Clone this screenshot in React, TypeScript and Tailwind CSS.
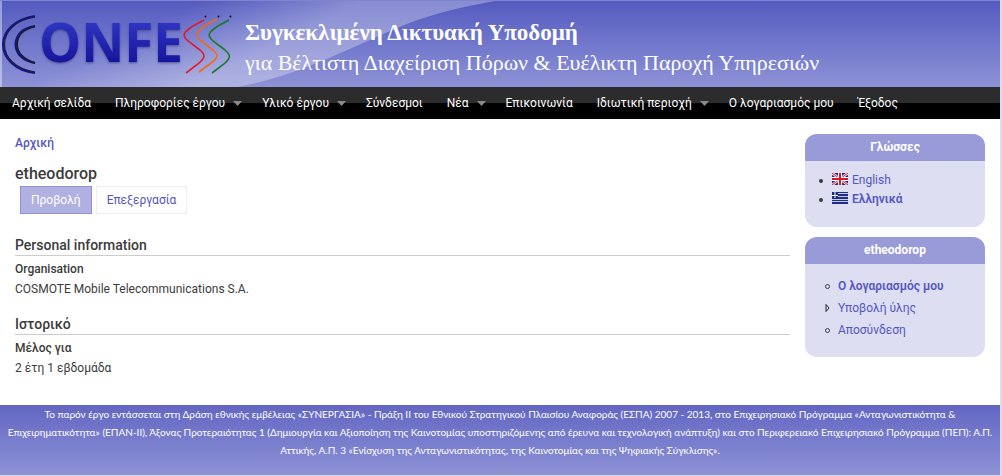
import { clsx } from "clsx";

const NAV_ITEMS = [
  { label: "Αρχική σελίδα", hasMenu: false },
  { label: "Πληροφορίες έργου", hasMenu: true },
  { label: "Υλικό έργου", hasMenu: true },
  { label: "Σύνδεσμοι", hasMenu: false },
  { label: "Νέα", hasMenu: true },
  { label: "Επικοινωνία", hasMenu: false },
  { label: "Ιδιωτική περιοχή", hasMenu: true },
  { label: "Ο λογαριασμός μου", hasMenu: false },
  { label: "Έξοδος", hasMenu: false },
];

function Logo() {
  return (
    <svg width="240" height="86" viewBox="0 0 240 86" role="img" aria-label="CONFESS" className="shrink-0">
      <defs>
        <linearGradient id="letters" x1="0" y1="0" x2="0" y2="1">
          <stop offset="20%" stopColor="#3036c4" />
          <stop offset="80%" stopColor="#15159c" />
        </linearGradient>
        <filter id="letterShadow" x="-10%" y="-10%" width="120%" height="130%">
          <feDropShadow dx="0" dy="1" stdDeviation="1" floodColor="#26265e" floodOpacity="0.6" />
        </filter>
      </defs>
      <g fill="none" strokeLinecap="butt">
        <path d="M35 15C15 18 3 30 3 43.500S15 70 35 72" stroke="#15158a" strokeWidth="2" />
        <path d="M35 16C16 19 4.500 30 4.500 43.500S16 68 35 71" stroke="#1c1c38" strokeWidth="1.200" />
        <path d="M35 25C22 27 15.500 34 15.500 43.500S23 60 35 62" stroke="#15158a" strokeWidth="2" />
        <path d="M35 25.500C23 28 17 35 17 43.500S24 59 35 62" stroke="#1c1c38" strokeWidth="2" />
      </g>
      <text
        x="39"
        y="61"
        fill="url(#letters)"
        filter="url(#letterShadow)"
        className="font-['Open_Sans',sans-serif] text-[53px] font-bold"
      >
        ONFE
      </text>
      <g fill="none" strokeWidth="1.600">
        <path d="M204 19L193 25C184 31 181 34 188 40L200 49C206 54 205 57 198 63L186 72" stroke="#e01b2c" />
        <path d="M217 18L206 24C197 30 194 34 201 40L213 49C219 54 218 57 211 62L199 71" stroke="#f06a1c" />
        <path d="M229 19L218 25C209 31 206 34 213 40L225 49C231 54 231 57 224 63L212 72" stroke="#1a7a2c" />
      </g>
      <g fill="#101020">
        <circle cx="205.500" cy="15.500" r="1" />
        <circle cx="218.500" cy="15.500" r="1" />
        <circle cx="230.500" cy="15.500" r="1" />
      </g>
    </svg>
  );
}

function Swoosh() {
  return (
    <svg width="500" height="86" viewBox="0 0 500 86" aria-hidden="true" className="absolute left-0 top-0">
      <defs>
        <linearGradient id="swoosh" gradientUnits="userSpaceOnUse" x1="200" y1="0" x2="250" y2="100">
          <stop offset="0%" stopColor="#ffffff" stopOpacity="0" />
          <stop offset="65%" stopColor="#ffffff" stopOpacity="0.3" />
          <stop offset="100%" stopColor="#ffffff" stopOpacity="0.3" />
        </linearGradient>
      </defs>
      <path d="M0 0H495C450 8 425 15 390 30C335 54 295 75 238 86H0Z" fill="url(#swoosh)" />
      <rect width="2" height="86" fill="#ffffff" fillOpacity="0.4" />
    </svg>
  );
}

function BritishFlag() {
  return (
    <svg width="16" height="12" viewBox="0 0 16 12" aria-hidden="true" className="mb-1">
      <rect width="16" height="12" fill="#1f2d78" />
      <path d="M0 0L16 12M16 0L0 12" stroke="#f0dce4" strokeWidth="2.600" />
      <path d="M0 0L16 12M16 0L0 12" stroke="#d8283c" strokeWidth="1" />
      <path d="M8 0V12M0 6H16" stroke="#ffffff" strokeWidth="4" />
      <path d="M8 0V12M0 6H16" stroke="#d8142c" strokeWidth="2" />
    </svg>
  );
}

function GreekFlag() {
  return (
    <svg width="16" height="12" viewBox="0 0 16 12" aria-hidden="true" className="mb-1">
      <rect width="16" height="12" fill="#1f2d88" />
      <path d="M6 1.500H16M6 4.500H16M0 7.500H16M0 9.500H16" stroke="#c8cbea" />
      <path d="M3 0V6M0 3.500H6" stroke="#ffffff" />
    </svg>
  );
}

function SideBlock({ title, children }: { title: string; children: React.ReactNode }) {
  return (
    <section className="overflow-hidden rounded-xl bg-[#dddef2]">
      <h2 className="bg-[#999ad8] text-center text-xs leading-[27px] font-bold text-white">{title}</h2>
      {children}
    </section>
  );
}

function ProfileSection({ title, label, value }: { title: string; label: string; value: string }) {
  return (
    <section className="mb-4">
      <h3 className="border-b border-[#cccccc] text-sm leading-[19px] font-medium">{title}</h3>
      <dl className="pt-[3px] leading-5">
        <dt className="font-medium">{label}</dt>
        <dd>{value}</dd>
      </dl>
    </section>
  );
}

export default function App() {
  return (
    <div className="bg-[#dcdcf2] pr-0.5 pb-px font-['Roboto','Noto_Sans',sans-serif] text-xs text-[#3b3b3b]">
      <div className="bg-white">
        <header className="relative flex border-t border-[#8084cf] bg-linear-to-b from-[#555bbf] to-[#8e92d6]">
          <Swoosh />
          <div className="relative flex">
            <Logo />
            <div className="pt-[17px] pl-[5px] font-['Liberation_Serif','DejaVu_Serif',serif] leading-[30px] whitespace-nowrap text-white">
              <h1 className="text-[23px] font-bold">Συγκεκλιμένη Δικτυακή Υποδομή</h1>
              <p className="text-[22px]">για Βέλτιστη Διαχείριση Πόρων &amp; Ευέλικτη Παροχή Υπηρεσιών</p>
            </div>
          </div>
        </header>

        <nav className="bg-linear-to-b from-[#2c2c2c] from-50% to-black to-50%">
          <ul className="flex leading-8 whitespace-nowrap text-white">
            {NAV_ITEMS.map((item) => (
              <li key={item.label}>
                <a href="#" className={clsx("flex items-center pl-3", item.hasMenu ? "pr-2" : "pr-3")}>
                  {item.label}
                  {item.hasMenu && (
                    <svg width="9" height="5" viewBox="0 0 9 5" aria-hidden="true" className="ml-2">
                      <path d="M0 0H9L4.500 5Z" fill="#8a8a8a" />
                    </svg>
                  )}
                </a>
              </li>
            ))}
          </ul>
        </nav>

        <div className="flex items-start gap-[15px] px-[15px] pt-[15px] pb-[11px]">
          <main className="min-w-0 flex-1">
            <a href="#" className="block leading-[18px] font-medium text-[#5456c0]">
              Αρχική
            </a>
            <h1 className="mt-3 text-base leading-5 font-medium">etheodorop</h1>
            <ul className="mt-[2px] ml-[5px] flex gap-1 leading-[26px]">
              <li>
                <a href="#" className="block border border-[#9192d6] bg-[#b0b1e1] px-2.5 text-white">
                  Προβολή
                </a>
              </li>
              <li>
                <a href="#" className="block border border-[#eeeeee] px-2.5 text-[#5456c0]">
                  Επεξεργασία
                </a>
              </li>
            </ul>
            <div className="mt-[22px]">
              <ProfileSection
                title="Personal information"
                label="Organisation"
                value="COSMOTE Mobile Telecommunications S.A."
              />
              <ProfileSection title="Ιστορικό" label="Μέλος για" value="2 έτη 1 εβδομάδα" />
            </div>
          </main>

          <aside className="flex w-[180px] shrink-0 flex-col gap-2.5 text-[#5456c0]">
            <SideBlock title="Γλώσσες">
              <ul className="px-3.5 pt-2.5 pb-[18px] leading-[19px]">
                <li className="flex items-center">
                  <span className="mr-[9px] size-1 rounded-full bg-[#3b3b3b]" />
                  <a href="#" className="flex items-center gap-1">
                    <BritishFlag />
                    English
                  </a>
                </li>
                <li className="flex items-center">
                  <span className="mr-[9px] size-1 rounded-full bg-[#3b3b3b]" />
                  <a href="#" className="flex items-center gap-1 font-semibold">
                    <GreekFlag />
                    Ελληνικά
                  </a>
                </li>
              </ul>
            </SideBlock>
            <SideBlock title="etheodorop">
              <ul className="px-5 pt-[11px] pb-4 leading-[22px]">
                <li className="flex items-center">
                  <span className="mr-2 size-[5px] rounded-full border border-[#3b3b3b]" />
                  <a href="#" className="font-semibold">
                    Ο λογαριασμός μου
                  </a>
                </li>
                <li className="flex items-center">
                  <svg width="5" height="8" viewBox="0 0 5 8" aria-hidden="true" className="mr-2">
                    <path d="M1 0.500V7.500L4 4Z" fill="none" stroke="#222222" />
                  </svg>
                  <a href="#">Υποβολή ύλης</a>
                </li>
                <li className="flex items-center">
                  <span className="mr-2 size-[5px] rounded-full border border-[#3b3b3b]" />
                  <a href="#">Αποσύνδεση</a>
                </li>
              </ul>
            </SideBlock>
          </aside>
        </div>

        <footer className="bg-linear-to-b from-[#6266c2] to-[#8e92d6] px-1 pb-4 text-center font-['Lato','Roboto',sans-serif] text-[10px] leading-[18px] text-white">
          <p>
            Το παρόν έργο εντάσσεται στη Δράση εθνικής εμβέλειας «ΣΥΝΕΡΓΑΣΙΑ» - Πράξη ΙΙ του Εθνικού Στρατηγικού
            Πλαισίου Αναφοράς (ΕΣΠΑ) 2007 - 2013, στο Επιχειρησιακό Πρόγραμμα «Ανταγωνιστικότητα &amp;
            <br />
            Επιχειρηματικότητα» (ΕΠΑΝ-ΙΙ), Άξονας Προτεραιότητας 1 (Δημιουργία και Αξιοποίηση της Καινοτομίας
            υποστηριζόμενης από έρευνα και τεχνολογική ανάπτυξη) και στο Περιφερειακό Επιχειρησιακό Πρόγραμμα (ΠΕΠ):
            Α.Π. Αττικής, Α.Π. 3 «Ενίσχυση της Ανταγωνιστικότητας, της Καινοτομίας και της Ψηφιακής Σύγκλισης».
          </p>
        </footer>
      </div>
    </div>
  );
}
